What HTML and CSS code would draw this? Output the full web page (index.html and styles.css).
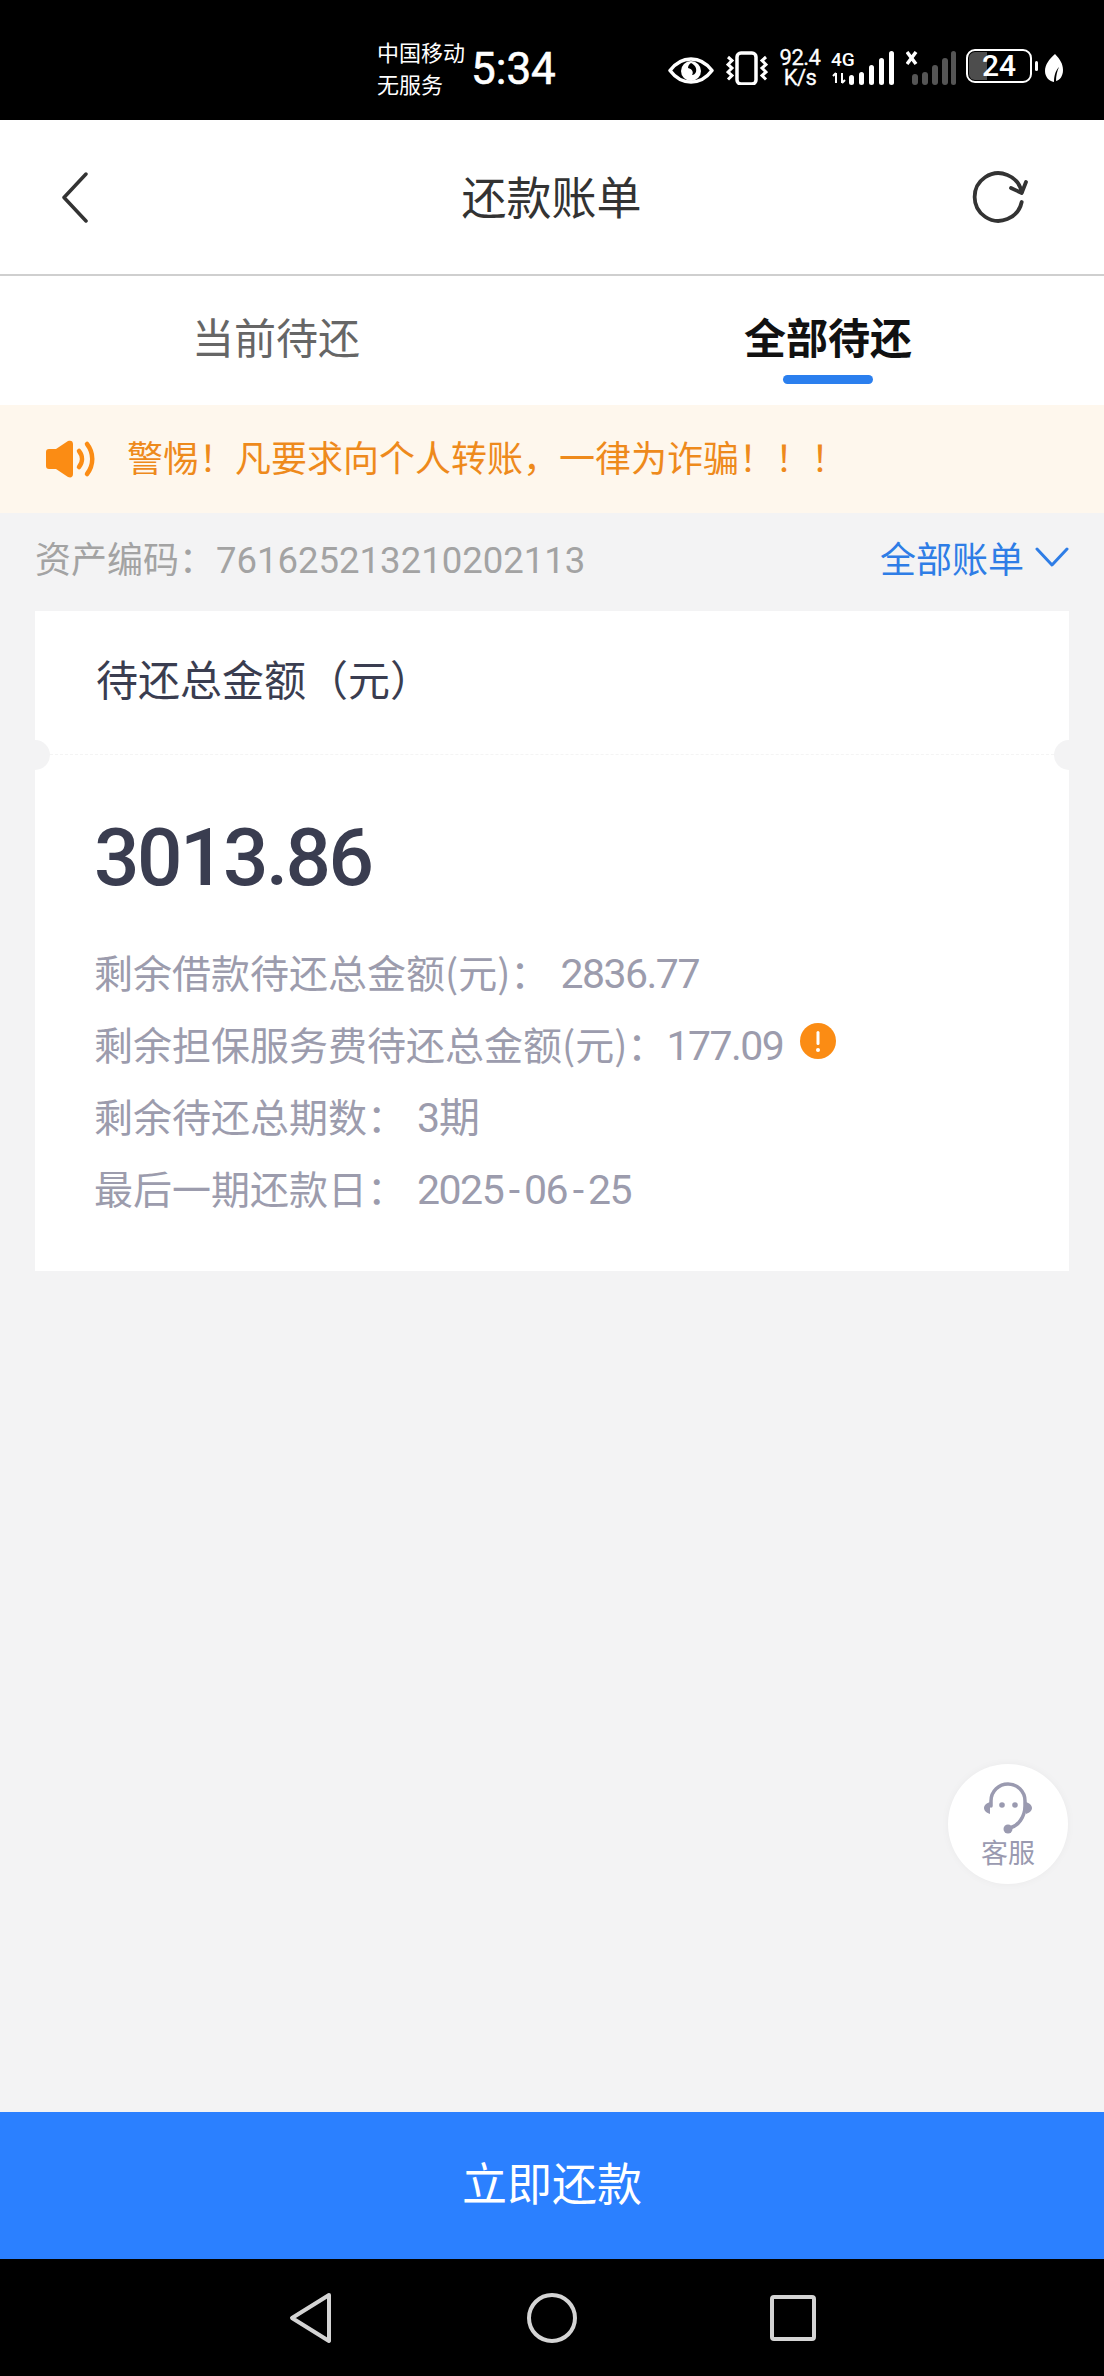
FILE: index.html
```html
<!DOCTYPE html>
<html lang="zh-CN">
<head>
<meta charset="utf-8">
<title>还款账单</title>
<link rel="stylesheet" href="styles.css">
</head>
<body>
<div class="app">
  <div class="status">
    <div class="carrier"><span>中国移动</span><span>无服务</span></div>
    <div class="time">5:34</div>
    <svg class="i-eye" viewBox="0 0 46 27"><path d="M2 13.500C8 5.500 15 2 23 2s15 3.500 21 11.500C38 21.500 31 25 23 25S8 21.500 2 13.500Z" fill="none" stroke="#fff" stroke-width="3.500" stroke-linejoin="round"/><circle cx="23" cy="14" r="10" fill="#fff"/><path d="M23 6c4 2 6 5 5 9-1 2-2 3-4 3 2-3 0-6-4-7 0-2 1-4 3-5Z" fill="#000"/></svg>
    <svg class="i-vib" viewBox="0 0 42 34"><rect x="11" y="2" width="19" height="31" rx="4" fill="none" stroke="#fff" stroke-width="3.500"/><path d="M2 6l4 3.500-4 4 4 3.500-4 4 4 3.500-4 4M40 6l-4 3.500 4 4-4 3.500 4 4-4 3.500 4 4" fill="none" stroke="#fff" stroke-width="3"/></svg>
    <div class="speed"><span>92.4</span><span>K/s</span></div>
    <div class="net">
      <div class="net-label"><span class="net-4g">4G</span><svg class="i-arrows" viewBox="0 0 16 12"><path d="M5 1v10M2 4l3-3M11 1v10M11 11l3-3" fill="none" stroke="#fff" stroke-width="2"/></svg></div>
      <svg class="i-bars" viewBox="0 0 45 34"><rect x="0" y="24" width="5" height="10" rx="2.500" fill="#fff"/><rect x="10" y="21" width="5" height="13" rx="2.500" fill="#fff"/><rect x="20" y="14" width="5" height="20" rx="2.500" fill="#fff"/><rect x="30" y="7" width="5" height="27" rx="2.500" fill="#fff"/><rect x="40" y="0" width="5" height="34" rx="2.500" fill="#fff"/></svg>
    </div>
    <svg class="i-bars2" viewBox="0 0 50 34"><path d="M1 1l9 12M10 1L1 13" stroke="#fff" stroke-width="3.500"/><rect x="6" y="23" width="6" height="11" rx="3" fill="#555"/><rect x="16" y="21" width="6" height="13" rx="3" fill="#555"/><rect x="26" y="14" width="6" height="20" rx="3" fill="#555"/><rect x="36" y="7" width="6" height="27" rx="3" fill="#555"/><rect x="45" y="0" width="5" height="34" rx="2.500" fill="#555"/></svg>
    <div class="battery"><div class="battery-fill"></div><span class="battery-num">24</span></div>
    <div class="battery-tip"></div>
    <svg class="i-leaf" viewBox="0 0 18 28"><path d="M10 0C15 5 18 10 18 16c0 6-3 10-7 11 0-5 1-10 3-14-3 3-5 8-5 15C4 27 0 23 0 17 0 11 4 5 10 0Z" fill="#fff"/></svg>
  </div>

  <header class="topbar">
    <svg class="i-back" viewBox="0 0 27 51"><path d="M25 2L3 25.500 25 49" fill="none" stroke="#333" stroke-width="3.500" stroke-linecap="round" stroke-linejoin="round"/></svg>
    <h1 class="title">还款账单</h1>
    <svg class="i-refresh" viewBox="0 0 56 52"><path d="M49.700 31A23.800 23.800 0 1 1 49.700 21" fill="none" stroke="#333" stroke-width="3.800" stroke-linecap="round"/><path d="M39 17L49.700 22 54 11" fill="none" stroke="#333" stroke-width="3.800" stroke-linecap="round" stroke-linejoin="round"/></svg>
  </header>

  <nav class="tabs">
    <div class="tab">当前待还</div>
    <div class="tab tab-active">全部待还</div>
  </nav>

  <div class="notice">
    <svg class="i-speaker" viewBox="0 0 52 38"><path d="M2 12c0-2 1-3 3-3h7L24 1c3-1 5 0 5 3v30c0 3-2 4-5 3L12 29H5c-2 0-3-1-3-3Z" fill="#fb8c14"/><path d="M35 11c4 5 4 11 0 16M43 4c7 9 7 21 0 30" fill="none" stroke="#fb8c14" stroke-width="4.500" stroke-linecap="round"/></svg>
    <span class="notice-text">警惕！凡要求向个人转账，一律为诈骗！！！</span>
  </div>

  <main class="content">
    <div class="asset-row">
      <div class="asset">资产编码：<span class="asset-num">761625213210202113</span></div>
      <div class="all-bills">全部账单<svg class="i-chev" viewBox="0 0 34 20"><path d="M2 2l15 16L32 2" fill="none" stroke="#2e7de6" stroke-width="3" stroke-linecap="round" stroke-linejoin="round"/></svg></div>
    </div>
    <section class="card">
      <div class="card-head">待还总金额（元）</div>
      <div class="card-body">
        <div class="amount">3013.86</div>
        <div class="line">剩余借款待还总金额(元)：<span class="val">2836.77</span></div>
        <div class="line">剩余担保服务费待还总金额(元)：<span class="val val-tight">177.09</span><svg class="i-warn" viewBox="0 0 36 36"><circle cx="18" cy="18" r="18" fill="#fb8c14"/><rect x="16.500" y="8" width="3" height="14" rx="1.500" fill="#fff"/><circle cx="18" cy="27" r="2" fill="#fff"/></svg></div>
        <div class="line">剩余待还总期数：<span class="val">3期</span></div>
        <div class="line">最后一期还款日：<span class="val">2025<span class="dash">-</span>06<span class="dash">-</span>25</span></div>
      </div>
    </section>
    <div class="service">
      <svg class="i-service" viewBox="0 0 48 52"><path d="M7 24V19C7 9 15 2 24 2s17 7 17 17v5c0 11-7 20-15 22" fill="none" stroke="#9a9ab0" stroke-width="3.500" stroke-linecap="round"/><path d="M6 20v12C3 31 0 29 0 26s3-5 6-6ZM42 20v12c3-1 6-3 6-6s-3-5-6-6Z" fill="#9a9ab0"/><circle cx="24" cy="47" r="4.500" fill="#9a9ab0"/><circle cx="18" cy="23" r="2.800" fill="#9a9ab0"/><circle cx="31" cy="23" r="2.800" fill="#9a9ab0"/></svg>
      <span>客服</span>
    </div>
  </main>

  <button class="pay"><span class="pay-text">立即还款</span></button>

  <div class="navbar">
    <svg class="i-nav-back" viewBox="0 0 44 52"><path d="M40 3L3 26 40 49Z" fill="none" stroke="#d4d4d4" stroke-width="4" stroke-linejoin="round"/></svg>
    <svg class="i-nav-home" viewBox="0 0 50 50"><circle cx="25" cy="25" r="23" fill="none" stroke="#d4d4d4" stroke-width="4"/></svg>
    <svg class="i-nav-rec" viewBox="0 0 46 46"><rect x="2" y="2" width="42" height="42" rx="2" fill="none" stroke="#d4d4d4" stroke-width="4"/></svg>
  </div>
</div>
</body>
</html>
```
FILE: styles.css
```css
* { box-sizing: border-box; }
html, body { margin: 0; padding: 0; }
body { font-family: "Noto Sans CJK SC", "Noto Sans", sans-serif; background: #f3f3f4; }
.app { width: 1104px; height: 2376px; display: flex; flex-direction: column; overflow: hidden; }

.status { height: 120px; flex: none; background: #000; color: #fff; display: flex; align-items: center; padding: 15px 0 0 377px; }
.carrier { width: 94px; display: flex; flex-direction: column; font-size: 22px; line-height: 32px; margin-top: -1px; }
.time { width: 112px; font: 400 44px/1 "Roboto", sans-serif; -webkit-text-stroke: .6px #fff; margin-top: 2px; }
.i-eye { width: 46px; height: 27px; margin-left: 85px; margin-top: 5px; }
.i-vib { width: 42px; height: 34px; margin-left: 12px; }
.speed { width: 44px; margin-left: 10px; display: flex; flex-direction: column; align-items: center; font: 400 22px/20px "Roboto", sans-serif; letter-spacing: -.5px; -webkit-text-stroke: .3px #fff; }
.net { display: flex; align-items: flex-end; margin-left: 9px; }
.net-label { width: 18px; height: 34px; display: flex; flex-direction: column; justify-content: space-between; }
.net-4g { font: 500 19px/18px "Roboto", sans-serif; white-space: nowrap; }
.i-arrows { width: 16px; height: 12px; flex: none; margin-bottom: 1px; }
.i-bars { width: 45px; height: 34px; }
.i-bars2 { width: 50px; height: 34px; margin-left: 12px; }
.battery { width: 66px; height: 34px; margin-left: 10px; margin-top: -3px; border: 2.500px solid #fff; border-radius: 9px; position: relative; display: flex; align-items: center; justify-content: center; }
.battery-fill { position: absolute; left: 1px; top: 1px; bottom: 1px; width: 18px; background: #4d4d4d; border-radius: 6px 0 0 6px; }
.battery-num { position: relative; font: 500 30px/1 "Roboto", sans-serif; }
.battery-tip { width: 3px; height: 10px; background: #fff; border-radius: 2px; margin-left: 3px; margin-top: -3px; }
.i-leaf { width: 18px; height: 28px; margin-left: 7px; }

.topbar { height: 156px; flex: none; background: #fff; border-bottom: 2px solid #cfcfcf; display: grid; grid-template-columns: 1fr auto 1fr; align-items: center; padding: 0 76px 0 61px; }
.title { margin: 0 0 4px; font-size: 45px; font-weight: 400; color: #333; line-height: 1; position: relative; left: 7px; }
.i-back { width: 27px; height: 51px; }
.i-refresh { width: 56px; height: 52px; justify-self: end; }

.tabs { height: 129px; flex: none; background: #fff; display: flex; }
.tab { width: 50%; text-align: center; font-size: 42px; line-height: 42px; color: #666; padding-top: 39px; position: relative; }
.tab-active { color: #111; font-weight: 700; }
.tab-active::after { content: ""; position: absolute; left: 231px; top: 99px; width: 90px; height: 9px; border-radius: 5px; background: #2b7fee; }

.notice { height: 108px; flex: none; background: #fef7ed; color: #ee8a1c; display: flex; align-items: center; padding-left: 44px; font-size: 36px; }
.i-speaker { width: 52px; height: 38px; margin-right: 31px; }
.notice-text { margin-bottom: 6px; }

.content { flex: 1; min-height: 0; position: relative; padding: 0 35px; }
.asset-row { height: 98px; display: flex; align-items: center; justify-content: space-between; font-size: 36px; padding-bottom: 11px; }
.asset { color: #a3a3a3; }
.asset-num { font-family: "Roboto", sans-serif; font-size: 36.500px; margin-left: 1px; }
.all-bills { color: #2e7de6; display: flex; align-items: center; gap: 11px; }
.i-chev { width: 34px; height: 20px; }

.card { height: 660px; background: #fff; position: relative; }
.card-head { height: 144px; padding: 41px 0 0 61px; font-size: 42px; line-height: 52px; color: #3a3d50; border-bottom: 1px dashed #f4f4f4; }
.card::before, .card::after { content: ""; position: absolute; top: 129px; width: 15px; height: 30px; background: #f3f3f4; }
.card::before { left: 0; border-radius: 0 15px 15px 0; }
.card::after { right: 0; border-radius: 15px 0 0 15px; }
.card-body { padding: 63px 0 0 59px; }
.amount { font: 500 80px/1 "Roboto", sans-serif; letter-spacing: -2.500px; color: #3a3d50; margin-bottom: 37px; }
.line { height: 72px; display: flex; align-items: baseline; font-size: 39px; line-height: 72px; color: #9c9cad; }
.val { font-family: "Roboto", sans-serif; font-size: 41px; letter-spacing: -1.500px; margin-left: 11px; }
.val-tight { margin-left: 0; }
.dash { padding: 0 5.500px; }
.i-warn { width: 36px; height: 36px; margin-left: 17px; margin-bottom: 5px; align-self: center; }

.service { position: absolute; left: 948px; top: 1251px; width: 120px; height: 120px; border-radius: 50%; background: #fff; box-shadow: 0 0 8px rgba(0,0,0,.04); display: flex; flex-direction: column; align-items: center; padding-top: 18px; font-size: 27px; line-height: 32px; color: #9a9ab0; }
.i-service { width: 48px; height: 52px; flex: none; }
.service span { margin-top: 2px; }

.pay { height: 147px; flex: none; background: #2b80ff; border: 0; color: #fff; font: 400 45px/1 "Noto Sans CJK SC", sans-serif; width: 100%; padding: 0; }
.pay-text { position: relative; top: -4px; }

.navbar { height: 117px; flex: none; background: #000; display: flex; align-items: center; }
.i-nav-back { width: 44px; height: 52px; margin-left: 289px; }
.i-nav-home { width: 50px; height: 50px; margin-left: 194px; }
.i-nav-rec { width: 46px; height: 46px; margin-left: 193px; }
```
